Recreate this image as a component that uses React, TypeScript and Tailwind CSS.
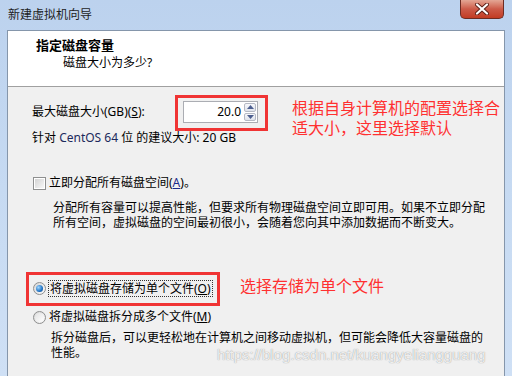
import React from "react";

function Checkbox() {
  return (
    <div className="w-[13px] h-[13px] border border-[#8e8f8f] bg-white p-[1px] shrink-0">
      <div className="w-full h-full bg-gradient-to-br from-[#d4d4d4] to-[#f7f7f7]" />
    </div>
  );
}

function Radio({ checked }: { checked?: boolean }) {
  return (
    <div className="w-[13px] h-[13px] rounded-full border border-[#8e8f8f] bg-gradient-to-br from-[#d6d6d6] to-[#fafafa] flex items-center justify-center shrink-0">
      {checked ? (
        <div className="w-[7px] h-[7px] rounded-full bg-[radial-gradient(circle_at_35%_35%,#9fd6ff,#1f73c4_60%,#0b3f86)]" />
      ) : (
        <div className="w-[9px] h-[9px] rounded-full bg-gradient-to-br from-[#e2e2e2] to-[#ffffff]" />
      )}
    </div>
  );
}

function SpinArrow({ up }: { up?: boolean }) {
  return (
    <div className="flex-1 border border-[#b5b9c4] rounded-[2px] bg-gradient-to-b from-[#f7f8fb] to-[#dfe3ec] flex items-center justify-center">
      <svg width="7" height="4" viewBox="0 0 7 4">
        {up ? (
          <polygon points="0,4 7,4 3.5,0" fill="#4d5f8f" />
        ) : (
          <polygon points="0,0 7,0 3.5,4" fill="#4d5f8f" />
        )}
      </svg>
    </div>
  );
}

export default function App() {
  return (
    <div className="relative w-[512px] h-[376px] overflow-hidden bg-gradient-to-b from-[#bcd2ee] via-[#c6daf2] to-[#cfe0f5] text-black font-['Noto_Sans','Noto_Sans_CJK_SC',sans-serif]">
      {/* Title bar */}
      <div className="flex h-[30px]">
        <div className="pl-[8px] pt-[6px] text-[12px] leading-[18px] text-[#1e1e1e]">新建虚拟机向导</div>
        <div className="ml-auto mr-[8px] w-[44px] h-[19px] rounded-b-[5px] border border-t-0 border-[#6d2c23] bg-gradient-to-b from-[#e3a695] via-[#cc5a48] to-[#c23b22] flex items-center justify-center">
          <svg width="14" height="12" viewBox="0 0 14 12">
            <path d="M2 1.5 L12 10.5 M12 1.5 L2 10.5" stroke="#5a1e16" strokeWidth="4" strokeLinecap="round" />
            <path d="M2 1.5 L12 10.5 M12 1.5 L2 10.5" stroke="#ffffff" strokeWidth="2.2" strokeLinecap="round" />
          </svg>
        </div>
      </div>

      {/* Client area */}
      <div className="mx-[7px] h-[346px] border-x border-t border-[#8596ab] flex flex-col">
        {/* Header */}
        <div className="h-[56px] bg-white border-b border-[#a0a0a0] flex flex-col">
          <div className="pl-[28px] pt-[5px] text-[13px] leading-[18px] font-bold">指定磁盘容量</div>
          <div className="pl-[55px] mt-[1px] text-[12px] leading-[16px]">磁盘大小为多少?</div>
        </div>

        {/* Body */}
        <div className="flex-1 bg-[#f0f0f0] pl-[24px] flex flex-col text-[12px] leading-[16px]">
          <div className="mt-[14px] flex items-center h-[22px]">
            <div className="w-[151px]">
              最大磁盘大小(GB)(<span className="underline">S</span>):
            </div>
            <div className="w-[75px] h-[22px] border border-[#abadb3] bg-white flex">
              <div className="flex-1 text-right pr-[3px] leading-[20px] text-[12px]">20.0</div>
              <div className="w-[13px] flex flex-col gap-[1px] py-[1px] pr-[1px]">
                <SpinArrow up />
                <SpinArrow />
              </div>
            </div>
          </div>

          <div className="mt-[7px]">
            针对 <span className="text-[#1b2a5c]">CentOS 64</span> 位 的建议大小: 20 GB
          </div>

          <div className="mt-[29px] pl-[1px] flex items-center gap-[3px]">
            <Checkbox />
            <span>
              立即分配所有磁盘空间(<span className="underline text-[#1b2a8c]">A</span>)。
            </span>
          </div>

          <div className="mt-[9px] pl-[21px] leading-[15px]">
            分配所有容量可以提高性能，但要求所有物理磁盘空间立即可用。如果不立即分配
            <br />
            所有空间，虚拟磁盘的空间最初很小，会随着您向其中添加数据而不断变大。
          </div>

          <div className="mt-[50px] pl-[1px] flex items-center gap-[2px]">
            <Radio checked />
            <span className="border border-dotted border-[#333] px-[1px] leading-[15px]">
              将虚拟磁盘存储为单个文件(<span className="underline">O</span>)
            </span>
          </div>

          <div className="mt-[12px] pl-[1px] flex items-center gap-[3px]">
            <Radio />
            <span>
              将虚拟磁盘拆分成多个文件(<span className="underline">M</span>)
            </span>
          </div>

          <div className="mt-[5px] pl-[19px] leading-[15px]">
            拆分磁盘后，可以更轻松地在计算机之间移动虚拟机，但可能会降低大容量磁盘的
            <br />
            性能。
          </div>
        </div>
      </div>

      {/* Annotations over the screenshot */}
      <div className="absolute left-[175px] top-[95px] w-[93px] h-[36px] border-[3px] border-[#f03434]" />
      <div className="absolute left-[292px] top-[97px] text-[16px] leading-[20px] text-[#ff3030] font-['Noto_Sans_CJK_SC',sans-serif]">
        根据自身计算机的配置选择合
        <br />
        适大小，这里选择默认
      </div>
      <div className="absolute left-[26px] top-[272px] w-[194px] h-[34px] border-[3px] border-[#f03434]" />
      <div className="absolute left-[240px] top-[275px] text-[16px] leading-[20px] text-[#ff3030] font-['Noto_Sans_CJK_SC',sans-serif]">
        选择存储为单个文件
      </div>
      <div className="absolute left-[217px] top-[345px] text-[15px] leading-[20px] text-[rgba(255,255,255,0.85)] [text-shadow:0_0_1px_rgba(120,120,120,0.9)] font-['Liberation_Sans',sans-serif]">
        https://blog.csdn.net/kuangyeliangguang
      </div>
    </div>
  );
}
